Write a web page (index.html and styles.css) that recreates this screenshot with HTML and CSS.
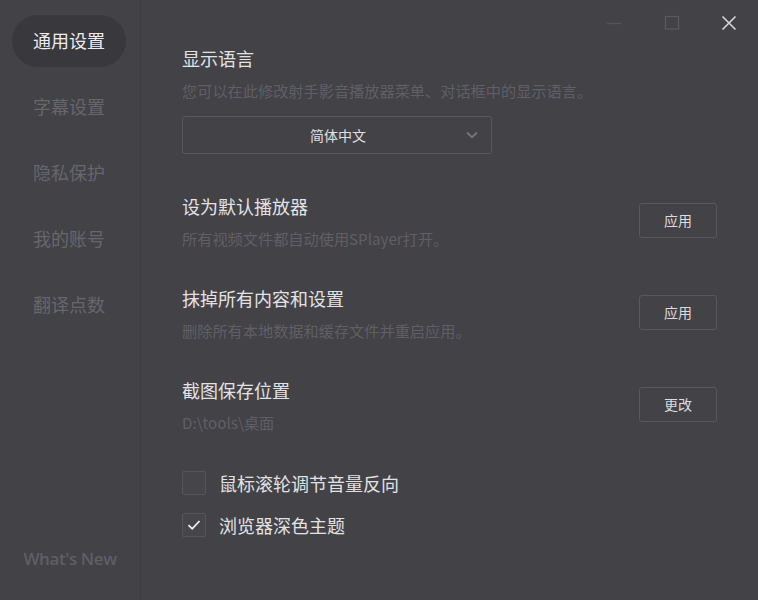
FILE: index.html
```html
<!DOCTYPE html>
<html lang="zh-CN">
<head>
<meta charset="utf-8">
<title>设置</title>
<link rel="stylesheet" href="styles.css">
</head>
<body>
<div class="app">
  <aside class="sidebar">
    <nav class="nav">
      <div class="nav-item active">通用设置</div>
      <div class="nav-item">字幕设置</div>
      <div class="nav-item">隐私保护</div>
      <div class="nav-item">我的账号</div>
      <div class="nav-item">翻译点数</div>
    </nav>
    <div class="whats-new">What's New</div>
  </aside>
  <main class="main">
    <div class="titlebar">
      <div class="win-btn">
        <svg width="16" height="16" viewBox="0 0 16 16"><path d="M1 8.5H15" stroke="#55545a" stroke-width="1.4"/></svg>
      </div>
      <div class="win-btn">
        <svg width="16" height="16" viewBox="0 0 16 16"><rect x="1.5" y="1.5" width="13" height="12.5" fill="none" stroke="#5b5a60" stroke-width="1.2"/></svg>
      </div>
      <div class="win-btn">
        <svg width="16" height="16" viewBox="0 0 16 16"><path d="M1.5 1.5L14.5 14.5M14.5 1.5L1.5 14.5" stroke="#d6d6d8" stroke-width="1.6"/></svg>
      </div>
    </div>

    <section class="block">
      <div class="title">显示语言</div>
      <div class="desc">您可以在此修改射手影音播放器菜单、对话框中的显示语言。</div>
      <div class="select">
        <span class="select-text">简体中文</span>
        <svg class="chev" width="12" height="8" viewBox="0 0 12 8"><path d="M1 1.5L6 6.2L11 1.5" fill="none" stroke="#77767c" stroke-width="1.8"/></svg>
      </div>
    </section>

    <section class="row first-row">
      <div class="row-text">
        <div class="title">设为默认播放器</div>
        <div class="desc">所有视频文件都自动使用SPlayer打开。</div>
      </div>
      <button class="btn">应用</button>
    </section>

    <section class="row">
      <div class="row-text">
        <div class="title">抹掉所有内容和设置</div>
        <div class="desc">删除所有本地数据和缓存文件并重启应用。</div>
      </div>
      <button class="btn">应用</button>
    </section>

    <section class="row">
      <div class="row-text">
        <div class="title">截图保存位置</div>
        <div class="desc">D:\tools\桌面</div>
      </div>
      <button class="btn">更改</button>
    </section>

    <div class="checks">
      <label class="check">
        <span class="box"></span>
        <span class="check-label">鼠标滚轮调节音量反向</span>
      </label>
      <label class="check">
        <span class="box">
          <svg width="14" height="12" viewBox="0 0 14 12"><path d="M1.5 6.2L5.2 9.8L12.5 2" fill="none" stroke="#f0f0f0" stroke-width="1.8"/></svg>
        </span>
        <span class="check-label">浏览器深色主题</span>
      </label>
    </div>
  </main>
</div>
</body>
</html>
```

FILE: styles.css
```css
* { box-sizing: border-box; }
html, body {
  margin: 0;
  padding: 0;
  background: #434247;
}
body {
  font-family: "Noto Sans CJK SC", "Noto Sans", sans-serif;
  color: #e4e4e6;
}
.app {
  display: flex;
  width: 758px;
  height: 600px;
  overflow: hidden;
}
.sidebar {
  width: 141px;
  flex: none;
  border-right: 1px solid #3d3c41;
  display: flex;
  flex-direction: column;
  padding: 15px 0 29px 12px;
}
.nav {
  display: flex;
  flex-direction: column;
  gap: 14px;
}
.nav-item {
  width: 114px;
  height: 52px;
  border-radius: 26px;
  display: flex;
  align-items: center;
  justify-content: center;
  font-size: 18px;
  line-height: 24px;
  padding-bottom: 2px;
  color: #67666c;
}
.nav-item.active {
  background: #39383d;
  color: #ececee;
}
.whats-new {
  margin-top: auto;
  width: 116px;
  text-align: center;
  font-family: "Open Sans", "Noto Sans", sans-serif;
  font-weight: 600;
  font-size: 17px;
  line-height: 24px;
  color: #5f5e64;
  letter-spacing: -0.4px;
}
.main {
  flex: 1;
  display: flex;
  flex-direction: column;
  padding-left: 41px;
}
.titlebar {
  height: 46px;
  display: flex;
  justify-content: flex-end;
}
.win-btn {
  width: 57.5px;
  height: 46px;
  display: flex;
  align-items: center;
  justify-content: center;
}
.title {
  font-size: 18px;
  line-height: 24px;
  color: #e2e2e4;
}
.desc {
  margin-top: 10px;
  font-size: 15.2px;
  line-height: 20px;
  color: #605f65;
}
.select {
  margin-top: 16px;
  width: 310px;
  height: 38px;
  border: 1px solid #59585e;
  border-radius: 3px;
  position: relative;
  display: flex;
  align-items: center;
  justify-content: center;
}
.select-text {
  font-size: 14px;
  color: #e0e0e2;
  margin-left: 2px;
}
.chev {
  position: absolute;
  right: 13px;
  top: 14px;
}
.row {
  display: flex;
  align-items: center;
  justify-content: space-between;
  width: 535px;
  margin-top: 38px;
}
.row.first-row {
  margin-top: 40px;
}
.btn {
  width: 78px;
  height: 35px;
  border: 1px solid #59585e;
  border-radius: 3px;
  background: transparent;
  font-family: "Noto Sans CJK SC", sans-serif;
  font-size: 14px;
  color: #dcdcde;
  padding: 0;
  margin-top: -2px;
}
.checks {
  margin-top: 39px;
  display: flex;
  flex-direction: column;
  gap: 18px;
}
.check {
  display: flex;
  align-items: center;
  height: 24px;
}
.box {
  width: 24px;
  height: 24px;
  border: 1px solid #56555b;
  border-radius: 2px;
  background: #46454a;
  display: flex;
  align-items: center;
  justify-content: center;
}
.check-label {
  margin-left: 13px;
  font-size: 18px;
  line-height: 24px;
  color: #e2e2e4;
}
```
